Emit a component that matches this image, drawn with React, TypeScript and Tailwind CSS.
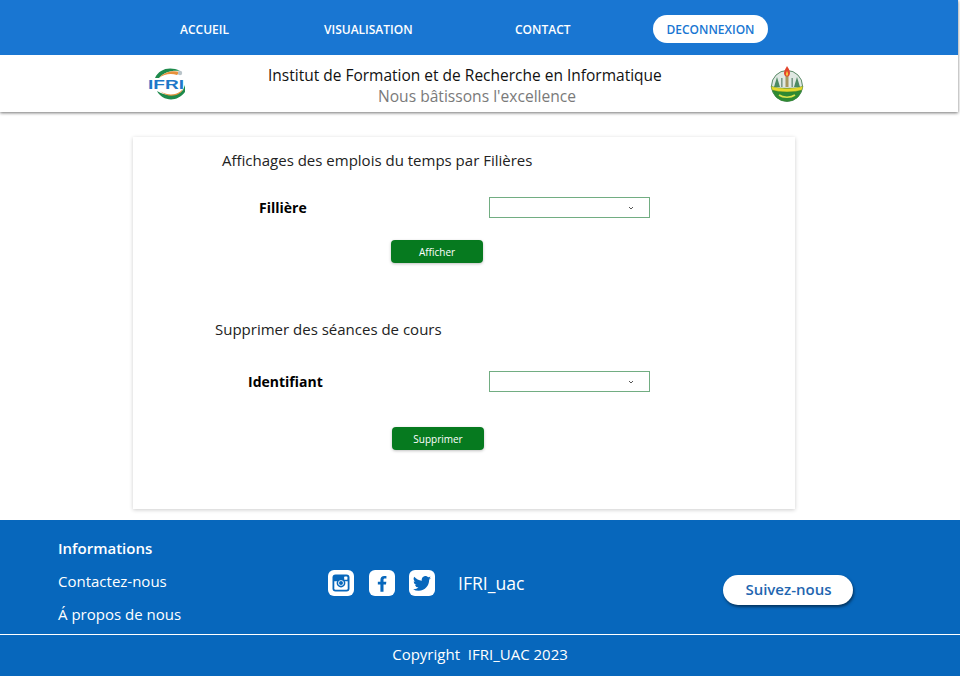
import React from "react";

function IfriLogo() {
  return (
    <svg width="38" height="34" viewBox="0 0 38 34" className="block">
      <path d="M7 11 C11 2 22 -1 32 4 C24 3 16 5 11 11 Z" fill="#1e8a4c" />
      <path d="M11 11 C16 5 24 3 32 5 L29 8 C23 6 16 7 11 11 Z" fill="#e8913a" />
      <circle cx="32" cy="6" r="2.2" fill="#b9c4c9" />
      <path d="M9 24 C14 34 29 36 37 25 C37 21 37 18 37 18 L35 23 C29 30 17 29 9 24 Z" fill="#1e8a4c" />
      <path d="M12 24 C19 29 29 29 35 22 C32 30 19 31 12 24 Z" fill="#e8913a" />
      <text x="0" y="21.5" fontFamily="'Liberation Sans', sans-serif" fontWeight="700" fontSize="13" textLength="36" lengthAdjust="spacingAndGlyphs" fill="#1e78c8">IFRI</text>
    </svg>
  );
}

function Emblem() {
  return (
    <svg width="34" height="36" viewBox="0 0 34 36" className="block">
      <circle cx="17" cy="20" r="15.5" fill="#dfe8e2" stroke="#5b8a68" strokeWidth="1" />
      <path d="M7 11 L10 21 L4 21 Z" fill="#4d8a63" />
      <path d="M27 11 L30 21 L24 21 Z" fill="#4d8a63" />
      <rect x="11" y="12" width="1.6" height="9" fill="#7b9a88" />
      <rect x="21.4" y="12" width="1.6" height="9" fill="#7b9a88" />
      <rect x="15.5" y="9" width="3" height="12" fill="#a5965f" />
      <path d="M17 0 C19 3 21 6 19.5 9 C18.5 11 15.5 11 14.5 9 C13 6 15.5 3 17 0 Z" fill="#e2442c" />
      <path d="M17 5 C18 7 18.5 8 17.8 9.2 C17.2 10 16.4 10 16 9 C15.6 8 16.3 6.5 17 5 Z" fill="#f6c63b" />
      <path d="M2 22 H32 C31 31 24 35.5 17 35.5 C10 35.5 3 31 2 22 Z" fill="#2f8a32" />
      <path d="M1 20 C8 23 26 23 33 20 L32 24 C25 26.5 9 26.5 2 24 Z" fill="#e6d92c" stroke="#3a7a2c" strokeWidth="0.4" />
      <path d="M9 29 C13 32 21 32 25 29" fill="none" stroke="#d9e24a" strokeWidth="1.6" />
    </svg>
  );
}

function Instagram() {
  return (
    <svg width="18" height="18" viewBox="0 0 18 18" className="block">
      <rect x="0.5" y="0.5" width="17" height="17" rx="3" fill="#0767bc" />
      <path d="M2.3 7.2 H15.7 V14.5 a1.2 1.2 0 0 1 -1.2 1.2 H3.5 a1.2 1.2 0 0 1 -1.2 -1.2 Z" fill="#fff" />
      <circle cx="9" cy="9" r="4.4" fill="#0767bc" />
      <circle cx="9" cy="9" r="2.8" fill="#fff" />
      <circle cx="9" cy="9" r="2" fill="#0767bc" />
      <rect x="12.2" y="2.6" width="3.2" height="3.2" rx="0.6" fill="#fff" />
    </svg>
  );
}

function Facebook() {
  return (
    <svg width="10" height="17" viewBox="0 0 12 20" className="block">
      <path d="M7.8 20 V11.2 H10.8 L11.2 7.8 H7.8 V5.7 C7.8 4.7 8.1 4 9.5 4 H11.3 V1 C11 1 9.9 0.9 8.6 0.9 C5.9 0.9 4.1 2.5 4.1 5.4 V7.8 H1 V11.2 H4.1 V20 Z" fill="#0767bc" />
    </svg>
  );
}

function Twitter() {
  return (
    <svg width="18" height="15" viewBox="0 0 24 20" className="block">
      <path d="M24 2.4 a9.8 9.8 0 0 1 -2.8 .8 A4.9 4.9 0 0 0 23.3 .5 a9.8 9.8 0 0 1 -3.1 1.2 A4.9 4.9 0 0 0 11.8 6.2 A14 14 0 0 1 1.7 1 a4.9 4.9 0 0 0 1.5 6.6 A4.9 4.9 0 0 1 1 7 v.1 a4.9 4.9 0 0 0 3.9 4.8 a4.9 4.9 0 0 1 -2.2 .1 a4.9 4.9 0 0 0 4.6 3.4 A9.9 9.9 0 0 1 0 17.5 a14 14 0 0 0 7.5 2.2 c9 0 14-7.5 14-14 v-.6 A10 10 0 0 0 24 2.4 Z" fill="#0767bc" />
    </svg>
  );
}

function Chevron() {
  return (
    <svg width="6" height="4" viewBox="0 0 6 4" className="block">
      <path d="M1 1 L3 3 L5 1" fill="none" stroke="#555" strokeWidth="1" />
    </svg>
  );
}

function SelectBox() {
  return (
    <div className="flex h-[21px] w-[161px] items-center justify-end border border-[#72ad82] bg-white pr-[15px]">
      <Chevron />
    </div>
  );
}

function ActionButton({ label }: { label: string }) {
  return (
    <button className="flex h-[23px] w-[92px] items-center justify-center rounded-[4px] bg-[#067a1f] pt-[1px] text-[10px] text-white shadow-[0_1px_3px_rgba(0,0,0,0.25)]">
      {label}
    </button>
  );
}

function SocialTile({ children }: { children: React.ReactNode }) {
  return (
    <div className="flex h-[26px] w-[26px] items-center justify-center rounded-[6px] bg-white">{children}</div>
  );
}

export default function App() {
  return (
    <div className="flex h-[676px] w-[960px] flex-col overflow-hidden bg-white font-['Open_Sans',sans-serif]">
      <div className="w-[958px] shadow-[0_1px_3px_rgba(0,0,0,0.55)]">
        <nav className="flex h-[55px] items-center bg-[#1976d2] pt-[2px] text-[12px] font-semibold text-white">
          <span className="ml-[180px] w-[144px] pt-[2px]">ACCUEIL</span>
          <span className="w-[191px] pt-[2px]">VISUALISATION</span>
          <span className="w-[138px] pt-[2px]">CONTACT</span>
          <span className="flex h-[28px] w-[115px] items-center justify-center rounded-full bg-white pt-[3px] font-semibold text-[#1976d2]">
            DECONNEXION
          </span>
        </nav>
        <header className="flex h-[57px] items-center bg-white">
          <div className="ml-[148px] mt-[1px] w-[120px]">
            <IfriLogo />
          </div>
          <div className="mt-[3px] w-[395px]">
            <div className="whitespace-nowrap text-[15.5px] font-medium leading-[20px] text-[#111]">
              Institut de Formation et de Recherche en Informatique
            </div>
            <div className="ml-[110px] mt-[1px] whitespace-nowrap text-[15.6px] font-medium leading-[20px] text-[#7a7a7a]">
              Nous bâtissons l'excellence
            </div>
          </div>
          <div className="ml-[107px] mt-[1px]">
            <Emblem />
          </div>
        </header>
      </div>

      <main className="flex-1 pl-[133px] pt-[25px]">
        <section className="h-[372px] w-[662px] bg-white pt-[13px] text-black shadow-[0_1px_4px_rgba(0,0,0,0.2)]">
          <h2 className="ml-[89px] text-[15px] font-normal leading-[20px] text-[#222]">
            Affichages des emplois du temps par Filières
          </h2>
          <div className="mt-[27px] flex items-center">
            <span className="ml-[126px] w-[230px] text-[14px] font-bold">Fillière</span>
            <SelectBox />
          </div>
          <div className="ml-[258px] mt-[22px]">
            <ActionButton label="Afficher" />
          </div>
          <h2 className="ml-[82px] mt-[56px] text-[15px] font-normal leading-[20px] text-[#222]">
            Supprimer des séances de cours
          </h2>
          <div className="mt-[32px] flex items-center">
            <span className="ml-[115px] w-[241px] text-[14px] font-bold">Identifiant</span>
            <SelectBox />
          </div>
          <div className="ml-[259px] mt-[35px]">
            <ActionButton label="Supprimer" />
          </div>
        </section>
      </main>

      <footer className="h-[156px] bg-[#0767bc] text-white">
        <div className="flex h-[115px] border-b border-white">
          <div className="ml-[58px] w-[270px] pt-[18px] text-[15px] leading-[21px]">
            <div className="font-semibold">Informations</div>
            <div className="mt-[12px]">Contactez-nous</div>
            <div className="mt-[12px]">Á propos de nous</div>
          </div>
          <div className="mt-[50px] flex h-[26px] items-center">
            <SocialTile>
              <Instagram />
            </SocialTile>
            <div className="ml-[15px]">
              <SocialTile>
                <Facebook />
              </SocialTile>
            </div>
            <div className="ml-[14px]">
              <SocialTile>
                <Twitter />
              </SocialTile>
            </div>
            <span className="ml-[23px] mt-[1px] text-[17.6px]">IFRI_uac</span>
          </div>
          <button className="ml-[199px] mt-[55px] flex h-[30px] w-[130px] items-center justify-center rounded-full bg-white pb-[1px] text-[15px] font-semibold text-[#1f66b0] shadow-[1px_2px_3px_rgba(0,0,0,0.5)]">
            Suivez-nous
          </button>
        </div>
        <div className="pt-[9px] text-center text-[15px] leading-[21px]">Copyright&nbsp; IFRI_UAC 2023</div>
      </footer>
    </div>
  );
}
